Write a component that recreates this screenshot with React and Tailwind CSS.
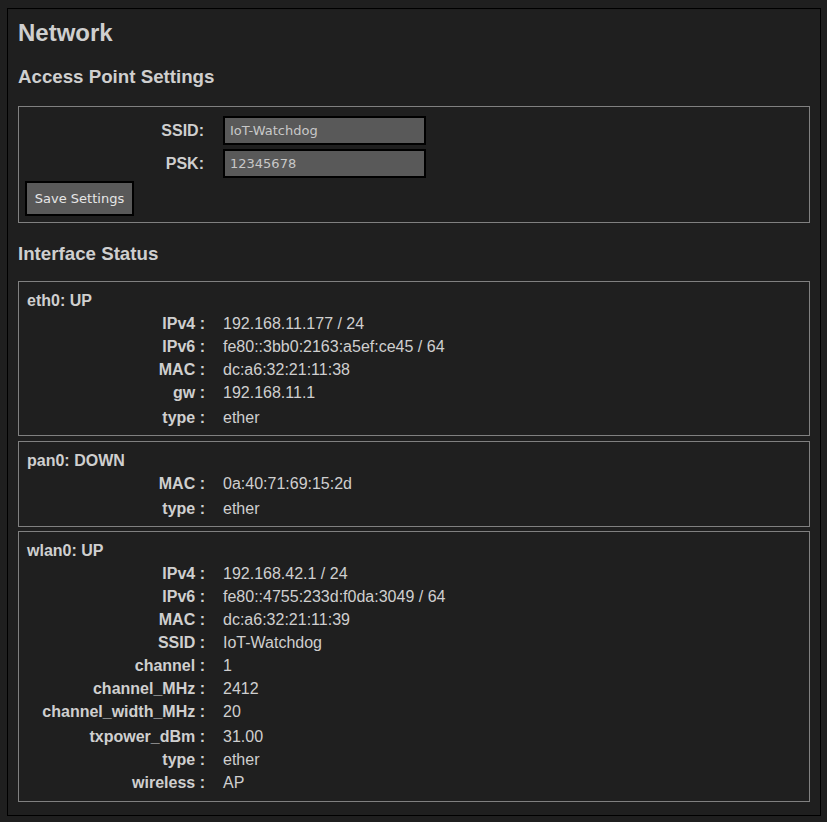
const apFields = [
  { label: 'SSID:', value: 'IoT-Watchdog' },
  { label: 'PSK:', value: '12345678' },
]

const interfaces = [
  {
    name: 'eth0',
    state: 'UP',
    rows: [
      { k: 'IPv4', v: '192.168.11.177 / 24' },
      { k: 'IPv6', v: 'fe80::3bb0:2163:a5ef:ce45 / 64' },
      { k: 'MAC', v: 'dc:a6:32:21:11:38' },
      { k: 'gw', v: '192.168.11.1' },
      { k: 'type', v: 'ether', tall: true },
    ],
  },
  {
    name: 'pan0',
    state: 'DOWN',
    rows: [
      { k: 'MAC', v: '0a:40:71:69:15:2d' },
      { k: 'type', v: 'ether', tall: true },
    ],
  },
  {
    name: 'wlan0',
    state: 'UP',
    rows: [
      { k: 'IPv4', v: '192.168.42.1 / 24' },
      { k: 'IPv6', v: 'fe80::4755:233d:f0da:3049 / 64' },
      { k: 'MAC', v: 'dc:a6:32:21:11:39' },
      { k: 'SSID', v: 'IoT-Watchdog' },
      { k: 'channel', v: '1' },
      { k: 'channel_MHz', v: '2412' },
      { k: 'channel_width_MHz', v: '20' },
      { k: 'txpower_dBm', v: '31.00', tall: true },
      { k: 'type', v: 'ether' },
      { k: 'wireless', v: 'AP' },
    ],
  },
]

const InterfaceBox = ({ iface, index }) => (
  <div
    className={`border border-[#808080] px-[8px] pt-[7px] ${index === 0 ? '' : index === 1 ? 'mt-[5px]' : 'mt-[4px]'} ${
      index === 2 ? 'pb-[7px]' : 'pb-[6px]'
    }`}
  >
    <div className="font-bold leading-[23px]">
      {iface.name}: {iface.state}
    </div>
    {iface.rows.map((row, i) => (
      <div key={i} className={`flex leading-[23px] ${row.tall ? 'pt-[2px]' : ''}`}>
        <div className="w-[178px] shrink-0 text-right font-bold">{row.k} :</div>
        <div className="pl-[18px]">{row.v}</div>
      </div>
    ))}
  </div>
)

export default function App() {
  return (
    <div className="min-h-[822px] bg-[#1f1f1f] pt-[8px] pl-[7px] pb-[6px] text-[16px] text-[#cfcfcf] font-['Liberation_Sans',Arial,sans-serif]">
      <div className="w-[814px] border border-black bg-[#1f1f1f] px-[10px] pb-[13px]">
        <h1 className="pt-[10px] text-[24px] font-bold leading-[28px]">Network</h1>
        <h3 className="mt-[19px] text-[18.72px] font-bold leading-[22px]">Access Point Settings</h3>

        {/* Access point form */}
        <div className="mt-[18px] border border-[#808080] px-[6px] pt-[9px] pb-[6px]">
          <div className="flex flex-col gap-[4px]">
            {apFields.map((f) => (
              <div key={f.label} className="flex items-center">
                <div className="w-[179px] shrink-0 text-right font-bold">{f.label}</div>
                <input
                  readOnly
                  value={f.value}
                  className="ml-[19px] h-[29px] w-[203px] border-2 border-black bg-[#595959] px-[5px] text-[13px] text-[#c8c8c8] font-['DejaVu_Sans',sans-serif] outline-none"
                />
              </div>
            ))}
          </div>
          <button
            type="button"
            className="mt-[3px] h-[35px] w-[109px] border-2 border-black bg-[#595959] text-[13px] text-[#e6e6e6] font-['DejaVu_Sans',sans-serif]"
          >
            Save Settings
          </button>
        </div>

        <h3 className="mt-[20px] text-[18.72px] font-bold leading-[22px]">Interface Status</h3>

        <div className="mt-[16px]">
          {interfaces.map((iface, i) => (
            <InterfaceBox key={iface.name} iface={iface} index={i} />
          ))}
        </div>
      </div>
    </div>
  )
}
